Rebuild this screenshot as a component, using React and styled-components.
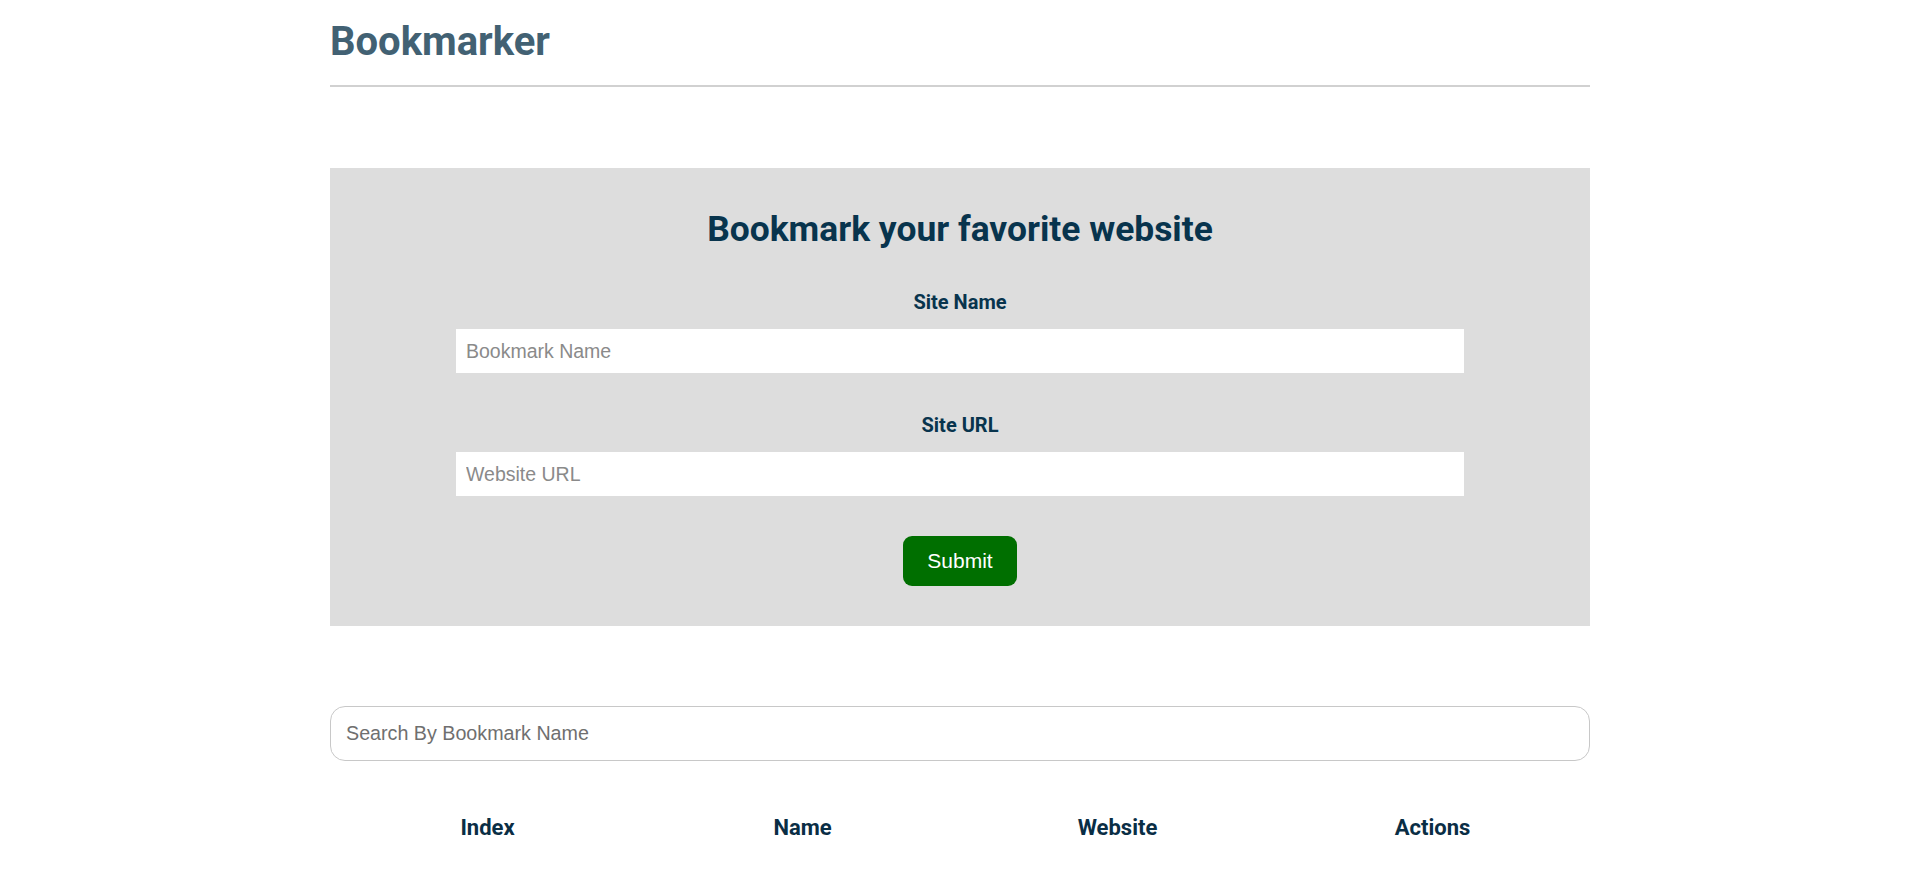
import React, { useState } from 'react';
import styled, { createGlobalStyle } from 'styled-components';

const GlobalStyle = createGlobalStyle`
  * {
    box-sizing: border-box;
  }
  body {
    margin: 0;
    background: #fff;
    font-family: Roboto, "Liberation Sans", Arial, sans-serif;
  }
`;

const Page = styled.div`
  width: 1260px;
  margin: 0 auto;
  padding-top: 18px;
`;

const Header = styled.header`
  padding-bottom: 19px;
  border-bottom: 2px solid #d1d1d1;
`;

const Logo = styled.h1`
  margin: 0;
  font-size: 40px;
  line-height: 48px;
  font-weight: 700;
  color: #426173;
`;

const Panel = styled.section`
  margin-top: 81px;
  background: #dddddd;
  padding: 41px 0 40px;
  display: flex;
  flex-direction: column;
  align-items: center;
  gap: 40px;
`;

const PanelTitle = styled.h2`
  margin: 0;
  font-size: 35.4px;
  line-height: 41px;
  font-weight: 700;
  color: #08344d;
`;

const Field = styled.div`
  width: 80%;
  display: flex;
  flex-direction: column;
  align-items: center;
  gap: 15px;
`;

const Label = styled.label`
  font-size: 20px;
  line-height: 24px;
  font-weight: 700;
  color: #08344d;
`;

const TextInput = styled.input`
  width: 100%;
  height: 44px;
  border: none;
  outline: none;
  background: #fff;
  padding: 0 10px;
  font-family: "Liberation Sans", Arial, sans-serif;
  font-size: 19.5px;
  color: #333;
  &::placeholder {
    color: #8a8a8a;
  }
`;

const SubmitButton = styled.button`
  width: 114px;
  height: 50px;
  border: none;
  border-radius: 9px;
  background: #006f00;
  color: #fff;
  font-family: "Liberation Sans", Arial, sans-serif;
  font-size: 21px;
  cursor: pointer;
  &:hover {
    background: #005c00;
  }
`;

const SearchInput = styled.input`
  display: block;
  width: 100%;
  height: 55px;
  margin-top: 80px;
  border: 1px solid #c8c8c8;
  border-radius: 15px;
  outline: none;
  padding: 0 15px;
  font-family: "Liberation Sans", Arial, sans-serif;
  font-size: 19.7px;
  color: #333;
  &::placeholder {
    color: #6f6f6f;
  }
`;

const Table = styled.table`
  width: 100%;
  margin-top: 45px;
  border-collapse: collapse;
  table-layout: fixed;
`;

const HeadCell = styled.th`
  padding: 9px 0;
  font-size: 22px;
  line-height: 26px;
  font-weight: 700;
  color: #0a2e45;
  text-align: center;
`;

const columns = ['Index', 'Name', 'Website', 'Actions'];

export default function App() {
  const [name, setName] = useState('');
  const [url, setUrl] = useState('');
  const [search, setSearch] = useState('');

  return (
    <>
      <GlobalStyle />
      <Page>
        <Header>
          <Logo>Bookmarker</Logo>
        </Header>

        <Panel>
          <PanelTitle>Bookmark your favorite website</PanelTitle>
          <Field>
            <Label htmlFor="siteName">Site Name</Label>
            <TextInput
              id="siteName"
              placeholder="Bookmark Name"
              value={name}
              onChange={(e) => setName(e.target.value)}
            />
          </Field>
          <Field>
            <Label htmlFor="siteUrl">Site URL</Label>
            <TextInput
              id="siteUrl"
              placeholder="Website URL"
              value={url}
              onChange={(e) => setUrl(e.target.value)}
            />
          </Field>
          <SubmitButton type="button">Submit</SubmitButton>
        </Panel>

        <SearchInput
          placeholder="Search By Bookmark Name"
          value={search}
          onChange={(e) => setSearch(e.target.value)}
        />

        <Table>
          <thead>
            <tr>
              {columns.map((c) => (
                <HeadCell key={c}>{c}</HeadCell>
              ))}
            </tr>
          </thead>
        </Table>
      </Page>
    </>
  );
}
